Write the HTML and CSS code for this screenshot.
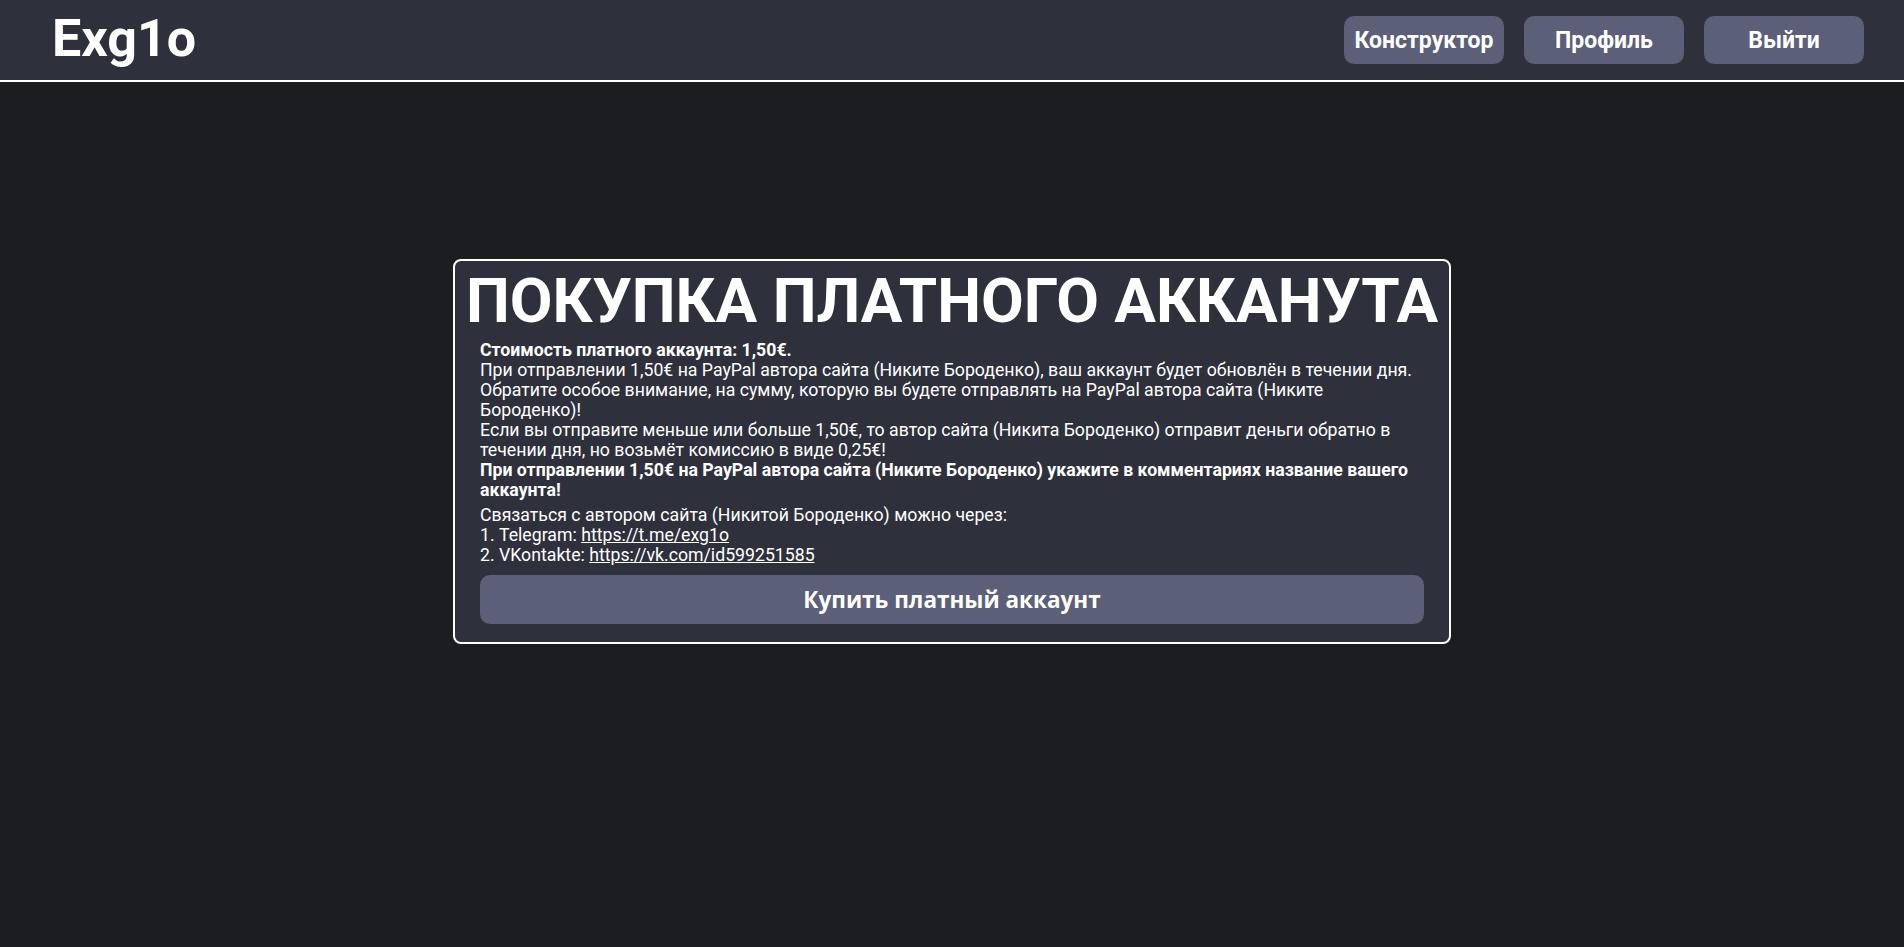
FILE: index.html
```html
<!DOCTYPE html>
<html lang="ru">
<head>
<meta charset="utf-8">
<title>Exg1o</title>
<link rel="stylesheet" href="styles.css">
</head>
<body>
<header class="topbar">
  <div class="logo">Exg1o</div>
  <nav class="nav">
    <a class="nav-btn" href="#">Конструктор</a>
    <a class="nav-btn" href="#">Профиль</a>
    <a class="nav-btn" href="#">Выйти</a>
  </nav>
</header>
<main class="main">
  <section class="card">
    <h1 class="card-title">ПОКУПКА ПЛАТНОГО АККАНУТА</h1>
    <p class="card-text">
      <b>Стоимость платного аккаунта: 1,50€.</b><br>
      При отправлении 1,50€ на PayPal автора сайта (Никите Бороденко), ваш аккаунт будет обновлён в течении дня.<br>
      Обратите особое внимание, на сумму, которую вы будете отправлять на PayPal автора сайта (Никите Бороденко)!<br>
      Если вы отправите меньше или больше 1,50€, то автор сайта (Никита Бороденко) отправит деньги обратно в течении дня, но возьмёт комиссию в виде 0,25€!<br>
      <b>При отправлении 1,50€ на PayPal автора сайта (Никите Бороденко) укажите в комментариях название вашего аккаунта!</b>
    </p>
    <p class="card-text contacts">
      Связаться с автором сайта (Никитой Бороденко) можно через:<br>
      1. Telegram: <a href="#">https://t.me/exg1o</a><br>
      2. VKontakte: <a href="#">https://vk.com/id599251585</a>
    </p>
    <button class="buy-btn" type="button">Купить платный аккаунт</button>
  </section>
</main>
</body>
</html>
```
FILE: styles.css
```css
* { box-sizing: border-box; }
html, body { margin: 0; padding: 0; }
body {
  background: #1c1d21;
  color: #ffffff;
  font-family: Roboto, "Liberation Sans", sans-serif;
  min-height: 947px;
}
.topbar {
  height: 82px;
  background: #2e313c;
  border-bottom: 2px solid #ffffff;
  display: flex;
  align-items: center;
  justify-content: space-between;
  padding: 0 40px 0 52px;
}
.logo {
  font-size: 52px;
  font-weight: 700;
  line-height: 1;
  margin-top: -2px;
}
.nav {
  display: flex;
  gap: 20px;
}
.nav-btn {
  width: 160px;
  height: 48px;
  background: #5c5f78;
  border-radius: 10px;
  color: #ffffff;
  text-decoration: none;
  font-size: 23px;
  font-weight: 700;
  display: flex;
  align-items: center;
  justify-content: center;
}
.main {
  display: flex;
  justify-content: center;
  padding-top: 177px;
}
.card {
  width: 998px;
  background: #2e313c;
  border: 2px solid #ffffff;
  border-radius: 8px;
  padding: 4px 25px 18px;
}
.card-title {
  margin: 0 -20px 3px;
  text-align: center;
  font-size: 62px;
  font-weight: 700;
  line-height: 72px;
  white-space: nowrap;
}
.card-text {
  margin: 0;
  font-size: 17.7px;
  line-height: 20px;
}
.card-text.contacts {
  margin-top: 5px;
}
.card-text a {
  color: #ffffff;
}
.buy-btn {
  display: block;
  width: 100%;
  height: 49px;
  margin-top: 10px;
  border: none;
  border-radius: 10px;
  background: #5c5f78;
  color: #ffffff;
  font-family: "Open Sans", "Noto Sans", sans-serif;
  font-size: 22.5px;
  font-weight: 700;
  cursor: pointer;
}
```
